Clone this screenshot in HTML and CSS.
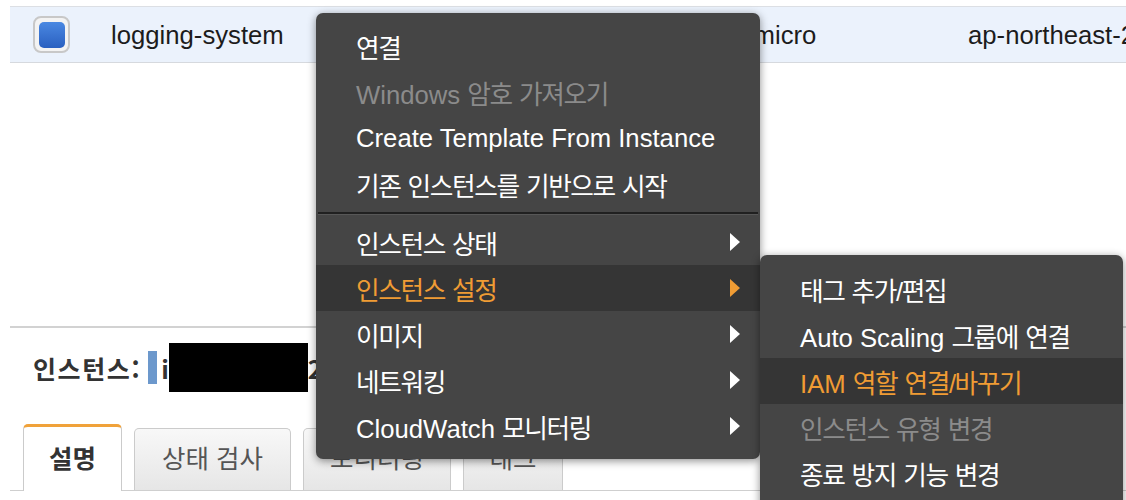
FILE: index.html
```html
<!DOCTYPE html>
<html lang="ko">
<head>
<meta charset="utf-8">
<title>EC2 Instance Actions</title>
<link rel="stylesheet" href="styles.css">
</head>
<body>
<div class="page">
  <div class="row">
    <div class="c-check"><span class="checkbox"><span class="checkbox-inner"></span></span></div>
    <div class="c-name">logging-system</div>
    <div class="c-type">t2.micro</div>
    <div class="c-region">ap-northeast-2a</div>
  </div>

  <div class="detail">
    <div class="detail-head">
      <span class="head-label">인스턴스:</span>
      <span class="head-bar"></span>
      <span class="head-id">i</span><span class="redact"></span><span class="head-id tail">2e</span>
    </div>
    <div class="tabs">
      <div class="tab tab-active">설명</div>
      <div class="tab tab-2">상태 검사</div>
      <div class="tab tab-3">모니터링</div>
      <div class="tab tab-4">태그</div>
    </div>
  </div>
</div>

<div class="menu main-menu">
  <div class="item"><span class="label"><span class="ko">연결</span></span></div>
  <div class="item disabled"><span class="label">Windows <span class="ko">암호 가져오기</span></span></div>
  <div class="item"><span class="label">Create Template From Instance</span></div>
  <div class="item"><span class="label"><span class="ko">기존 인스턴스를 기반으로 시작</span></span></div>
  <div class="sep"></div>
  <div class="item"><span class="label"><span class="ko">인스턴스 상태</span></span><span class="arrow"></span></div>
  <div class="item active"><span class="label"><span class="ko">인스턴스 설정</span></span><span class="arrow"></span></div>
  <div class="item"><span class="label"><span class="ko">이미지</span></span><span class="arrow"></span></div>
  <div class="item"><span class="label"><span class="ko">네트워킹</span></span><span class="arrow"></span></div>
  <div class="item"><span class="label">CloudWatch <span class="ko">모니터링</span></span><span class="arrow"></span></div>
</div>

<div class="menu sub-menu">
  <div class="item"><span class="label"><span class="ko">태그 추가/편집</span></span></div>
  <div class="item"><span class="label">Auto Scaling <span class="ko">그룹에 연결</span></span></div>
  <div class="item active"><span class="label">IAM <span class="ko">역할 연결/바꾸기</span></span></div>
  <div class="item disabled"><span class="label"><span class="ko">인스턴스 유형 변경</span></span></div>
  <div class="item"><span class="label"><span class="ko">종료 방지 기능 변경</span></span></div>
</div>
</body>
</html>
```

FILE: styles.css
```css
html, body {
  margin: 0;
  padding: 0;
  background: #ffffff;
  overflow: hidden;
}

body {
  width: 1126px;
  height: 500px;
  position: relative;
  font-family: "Liberation Sans", "Noto Sans CJK KR", sans-serif;
  color: #1c1c1c;
}

.page {
  padding: 6px 0 0 10px;
}

/* ---------- table row ---------- */
.row {
  display: flex;
  align-items: center;
  height: 55px;
  background: #ebf2fc;
  border-top: 1px solid #dcdfe4;
  border-bottom: 1px solid #d6d9de;
  font-size: 25.7px;
  white-space: nowrap;
}

.c-check {
  width: 101px;
  box-sizing: border-box;
  padding-left: 23px;
  display: flex;
  align-items: center;
}

.checkbox {
  width: 37px;
  height: 37px;
  box-sizing: border-box;
  border: 2px solid #c8c8c8;
  border-radius: 8px;
  background: #f3f3f3;
  display: flex;
  align-items: center;
  justify-content: center;
}

.checkbox-inner {
  width: 26px;
  height: 26px;
  border-radius: 5px;
  background: linear-gradient(#4a88e2, #2a60c0);
}

.c-name {
  width: 614px;
  padding-top: 2px;
}

.c-type {
  width: 243px;
  padding-top: 2px;
}

.c-region {
  flex: 1;
  overflow: hidden;
  padding-top: 2px;
}

/* ---------- detail panel ---------- */
.detail {
  margin-top: 263px;
  border-top: 2px solid #d2d2d2;
}

.detail-head {
  display: flex;
  align-items: center;
  height: 49px;
  margin-top: 15px;
  padding-left: 23px;
  font-family: "Noto Sans CJK KR", "Liberation Sans", sans-serif;
}

.head-label {
  font-size: 25px;
  font-weight: 700;
  color: #333;
  letter-spacing: 1.6px;
}

.head-bar {
  width: 9px;
  height: 33px;
  background: #6c98cc;
  margin-left: 7px;
}

.head-id {
  font-size: 25px;
  font-weight: 700;
  color: #333;
  margin-left: 4px;
}

.head-id.tail {
  margin-left: 0;
}

.redact {
  width: 139px;
  height: 49px;
  background: #000;
}

.tabs {
  display: flex;
  align-items: flex-end;
  gap: 12px;
  height: 66px;
  margin-top: 32px;
  padding-left: 13px;
  border-bottom: 1px solid #cfcfcf;
  font-family: "Noto Sans CJK KR", "Liberation Sans", sans-serif;
  font-size: 25.5px;
}

.tab {
  box-sizing: border-box;
  height: 62px;
  display: flex;
  align-items: center;
  justify-content: center;
  border: 1px solid #cbcbcb;
  border-bottom: none;
  border-radius: 5px 5px 0 0;
  background: linear-gradient(#f8f8f8, #e6e6e6);
  color: #555;
  padding-bottom: 6px;
}

.tab-active {
  width: 99px;
  height: 67px;
  margin-bottom: -1px;
  border-top: 3px solid #f0a23a;
  background: #ffffff;
  color: #333;
  font-weight: 700;
}

.tab-2 { width: 157px; }
.tab-3 { width: 148px; }
.tab-4 { width: 100px; }

/* ---------- context menus ---------- */
.menu {
  position: absolute;
  box-sizing: border-box;
  background: #454545;
  border-radius: 7px;
  box-shadow: 0 2px 9px rgba(0, 0, 0, 0.45);
  font-size: 25.7px;
  color: #ffffff;
  white-space: nowrap;
}

.main-menu {
  left: 316px;
  top: 13px;
  width: 444px;
  padding: 10px 0;
}

.sub-menu {
  left: 760px;
  top: 255px;
  width: 363px;
  height: 260px;
  padding-top: 11px;
}

.item {
  display: flex;
  align-items: center;
  height: 46px;
  padding: 0 20px 0 40px;
}

.ko {
  letter-spacing: -1.4px;
  word-spacing: 1.4px;
}

.item.disabled {
  color: #8b8b8b;
}

.item.active {
  background: #353535;
  color: #f09c34;
}

.arrow {
  margin-left: auto;
  width: 0;
  height: 0;
  border-top: 9px solid transparent;
  border-bottom: 9px solid transparent;
  border-left: 10px solid #ffffff;
}

.item.active .arrow {
  border-left-color: #f09c34;
}

.sep {
  margin: 5px 2px 4px;
  border-top: 2px solid #202020;
  border-bottom: 1px solid #575757;
}
```
